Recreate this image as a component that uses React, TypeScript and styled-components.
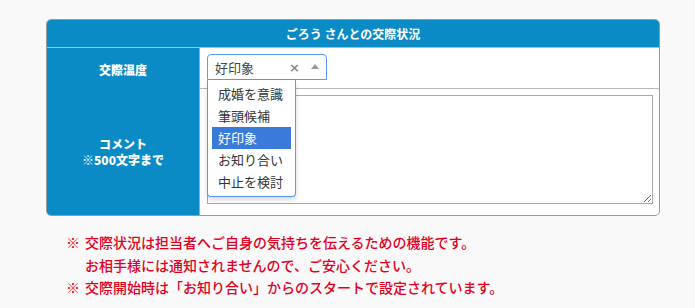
import styled, { createGlobalStyle } from "styled-components";

const GlobalStyle = createGlobalStyle`
  body {
    margin: 0;
    background: #f9f9f9;
    font-family: "Noto Sans CJK JP", "Noto Sans", sans-serif;
  }
`;

const Page = styled.div`
  padding: 19px 35px 0 46px;
`;

const Card = styled.section`
  border: 1px solid #9a9a9a;
  border-radius: 5px;
  background: #fff;
`;

const CardHeader = styled.h2`
  margin: 0;
  height: 27px;
  line-height: 27px;
  background: #0a8bc5;
  border-radius: 4px 4px 0 0;
  color: #fff;
  font-size: 12px;
  font-weight: bold;
  text-align: center;
`;

const Row = styled.div<{ $last?: boolean }>`
  display: grid;
  grid-template-columns: 153px 1fr;
  border-top: 1px solid #b8b8b8;
  height: ${(p) => (p.$last ? "126px" : "40px")};
`;

const Label = styled.div<{ $last?: boolean }>`
  background: #0a8bc5;
  border-right: 1px solid #a8a8a8;
  border-radius: ${(p) => (p.$last ? "0 0 0 4px" : "0")};
  color: #fff;
  font-size: 12px;
  font-weight: 900;
  line-height: 16px;
  display: flex;
  align-items: center;
  justify-content: center;
  text-align: center;
`;

const Value = styled.div`
  padding: 6px 6px 11px 7px;
  position: relative;
`;

const SelectBox = styled.div`
  position: relative;
  width: 120px;
  height: 26px;
  box-sizing: border-box;
  border: 1px solid #5897fb;
  border-radius: 4px 4px 0 0;
  background: #fff;
  display: flex;
  align-items: center;
  padding-left: 7px;
  font-size: 13px;
  color: #444;
  z-index: 2;
`;

const SelectText = styled.span`
  flex: 1;
`;

const Clear = styled.span`
  color: #888;
  font-weight: bold;
  font-size: 13px;
  margin-right: 11px;
  font-family: "DejaVu Sans", sans-serif;
`;

const Arrow = styled.span`
  width: 0;
  height: 0;
  border-left: 4px solid transparent;
  border-right: 4px solid transparent;
  border-bottom: 5px solid #999;
  margin-right: 7px;
  margin-top: -2px;
`;

const Dropdown = styled.ul`
  position: absolute;
  top: 25px;
  left: -1px;
  width: 89px;
  box-sizing: border-box;
  margin: 0;
  padding: 3px 4px 3px;
  list-style: none;
  background: #fff;
  border: 1px solid #5897fb;
  border-top: none;
  border-radius: 0 0 4px 4px;
  box-shadow: 0 3px 5px rgba(0, 0, 0, 0.15);
`;

const Option = styled.li<{ $active?: boolean }>`
  height: 22px;
  line-height: 22px;
  padding-left: 6px;
  font-size: 13px;
  color: ${(p) => (p.$active ? "#fff" : "#333")};
  background: ${(p) => (p.$active ? "#3a7bd9" : "transparent")};
`;

const TextArea = styled.textarea`
  display: block;
  width: 100%;
  height: 109px;
  box-sizing: border-box;
  border: 1px solid #aaa;
  margin: 0;
  resize: vertical;
  font-family: inherit;
`;

const Notes = styled.ul`
  margin: 15px 0 0 20px;
  padding: 0;
  list-style: none;
  color: #e2001e;
  font-size: 14px;
  font-weight: 500;
  line-height: 22.5px;
`;

const Note = styled.li`
  display: flex;
`;

const Mark = styled.span`
  flex: none;
  width: 19px;
`;

const options = ["成婚を意識", "筆頭候補", "好印象", "お知り合い", "中止を検討"];

export default function App() {
  return (
    <>
      <GlobalStyle />
      <Page>
        <Card>
          <CardHeader>ごろう さんとの交際状況</CardHeader>
          <Row>
            <Label>交際温度</Label>
            <Value>
              <SelectBox>
                <SelectText>好印象</SelectText>
                <Clear>×</Clear>
                <Arrow />
                <Dropdown>
                  {options.map((o) => (
                    <Option key={o} $active={o === "好印象"}>
                      {o}
                    </Option>
                  ))}
                </Dropdown>
              </SelectBox>
            </Value>
          </Row>
          <Row $last>
            <Label $last>
              コメント
              <br />
              ※500文字まで
            </Label>
            <Value>
              <TextArea />
            </Value>
          </Row>
        </Card>
        <Notes>
          <Note>
            <Mark>※</Mark>
            <span>
              交際状況は担当者へご自身の気持ちを伝えるための機能です。
              <br />
              お相手様には通知されませんので、ご安心ください。
            </span>
          </Note>
          <Note>
            <Mark>※</Mark>
            <span>交際開始時は「お知り合い」からのスタートで設定されています。</span>
          </Note>
        </Notes>
      </Page>
    </>
  );
}
